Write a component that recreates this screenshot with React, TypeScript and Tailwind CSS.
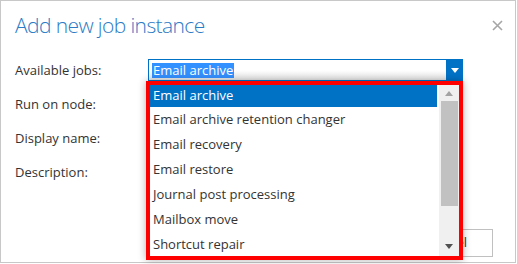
import React from "react";

const jobs = [
  "Email archive",
  "Email archive retention changer",
  "Email recovery",
  "Email restore",
  "Journal post processing",
  "Mailbox move",
  "Shortcut repair",
];

const labels = ["Available jobs:", "Run on node:", "Display name:", "Description:"];

export default function App() {
  return (
    <div className="w-[517px] h-[264px] bg-white font-['Open_Sans','Noto_Sans',sans-serif] text-[13px] text-[#333333]">
      <div className="relative w-[516px] h-[263px] border border-[#c8c8c8] flex flex-col">
        {/* Header */}
        <div className="flex items-start justify-between pl-[14px] pr-[12px] pt-[11px]">
          <h1 className="text-[21px] leading-[27px] font-light tracking-[-0.6px] text-[#2b7bc6]">
            Add new job instance
          </h1>
          <svg width="11" height="11" viewBox="0 0 11 11" className="mt-[8px]">
            <path d="M1 1 L10 10 M10 1 L1 10" stroke="#a6a6a6" strokeWidth="1.6" />
          </svg>
        </div>

        {/* Form rows */}
        <div className="flex flex-col gap-3 mt-[20px] pl-[14px]">
          {labels.map((l, i) => (
            <div key={l} className="flex items-center h-[22px]">
              <div className="w-[133px] leading-[22px]">{l}</div>
              {i === 0 ? (
                <div className="flex w-[315px] h-[22px] border border-[#0072c6] bg-gradient-to-b from-white via-white to-[#e4e4e4]">
                  <div className="flex-1 flex items-center pl-[3px]">
                    <span className="bg-[#3390ff] text-white leading-[15px] h-[15px] px-[1px]">
                      Email archive
                    </span>
                  </div>
                  <div className="w-[17px] -my-px -mr-px bg-[#0072c6] flex items-center justify-center">
                    <svg width="8" height="5" viewBox="0 0 8 5">
                      <path d="M0 0 H8 L4 5 Z" fill="white" />
                    </svg>
                  </div>
                </div>
              ) : (
                <div className="w-[315px] h-[22px] border border-[#c8c8c8]" />
              )}
            </div>
          ))}
        </div>

        {/* Footer */}
        <div className="mt-auto flex justify-end gap-2 pr-[22px] pb-[5px]">
          <button className="w-[92px] h-[28px] border border-[#c0c0c0] bg-white text-[#333333]">
            OK
          </button>
          <button className="w-[92px] h-[28px] border border-[#c0c0c0] bg-white text-[#333333]">
            Cancel
          </button>
        </div>

        {/* Open dropdown list */}
        <div className="absolute left-[145px] top-[80px] w-[317px] h-[179px] border-4 border-[#ff0000] bg-white flex shadow-[0_0_8px_rgba(0,0,0,0.3)]">
          <div className="w-[287px] flex flex-col overflow-hidden">
            {jobs.map((j, i) => (
              <div
                key={j}
                className={
                  i === 0
                    ? "h-[22px] shrink-0 flex items-center pl-[3px] bg-[#0072c6] text-white"
                    : "h-[25px] shrink-0 flex items-center pl-[3px]"
                }
              >
                {j}
              </div>
            ))}
          </div>
          <div className="ml-[2px] flex-1 bg-[#f0f0f0] flex flex-col">
            <div className="h-[16px] flex items-center justify-center">
              <svg width="8" height="5" viewBox="0 0 8 5">
                <path d="M0 5 H8 L4 0 Z" fill="#a3a3a3" />
              </svg>
            </div>
            <div className="ml-[2px] mr-px h-[105px] bg-[#c1c1c1]" />
            <div className="mt-auto h-[20px] flex items-center justify-center">
              <svg width="8" height="5" viewBox="0 0 8 5">
                <path d="M0 0 H8 L4 5 Z" fill="#505050" />
              </svg>
            </div>
          </div>
        </div>
      </div>
    </div>
  );
}
